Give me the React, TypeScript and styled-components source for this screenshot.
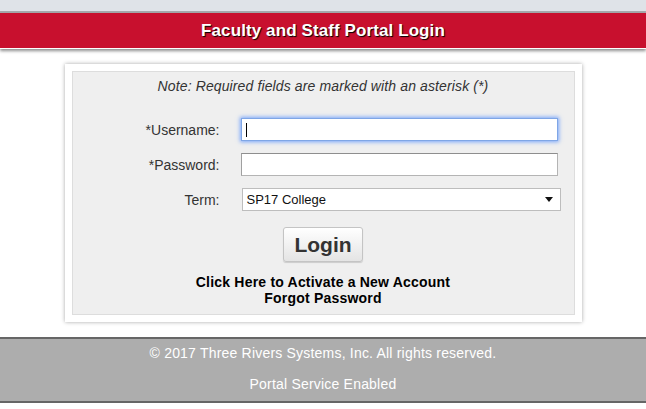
import styled, { createGlobalStyle } from "styled-components";

const GlobalStyle = createGlobalStyle`
  body {
    margin: 0;
    background: #ffffff;
    font-family: "Liberation Sans", Arial, sans-serif;
  }
`;

const TopStrip = styled.div`
  height: 11px;
  background: #dfe3e8;
  border-bottom: 2px solid #a7a9ac;
`;

const TitleBar = styled.div`
  height: 35px;
  background: #c8102e;
  border-bottom: 1px solid #ffffff;
  box-shadow: 0 2px 3px rgba(0, 0, 0, 0.45);
  display: flex;
  align-items: center;
  justify-content: center;
`;

const Title = styled.h1`
  margin: 0;
  font-size: 17px;
  font-weight: bold;
  letter-spacing: 0.1px;
  color: #ffffff;
  text-shadow: 1px 1px 1px #000000;
`;

const Card = styled.div`
  width: 503px;
  margin: 15px auto 0;
  padding: 7px;
  background: #ffffff;
  box-shadow: 0 0 4px rgba(0, 0, 0, 0.35);
`;

const Panel = styled.div`
  background: #efefef;
  border: 1px solid #dddddd;
  padding: 5px 0 8px;
  display: flex;
  flex-direction: column;
  align-items: center;
`;

const Note = styled.p`
  margin: 0;
  font-size: 14px;
  line-height: 18px;
  letter-spacing: 0.12px;
  font-style: italic;
  color: #333333;
`;

const Form = styled.div`
  align-self: stretch;
  margin-top: 23px;
  display: grid;
  grid-template-columns: 147px 320px;
  column-gap: 21px;
  row-gap: 12px;
  align-items: center;
`;

const Label = styled.label`
  text-align: right;
  font-size: 14px;
  color: #333333;
`;

const Field = styled.div<{ $shift?: number }>`
  position: relative;
  margin-left: ${(p) => p.$shift ?? 0}px;
`;

const Input = styled.input<{ $focused?: boolean }>`
  box-sizing: border-box;
  width: 317px;
  height: 23px;
  margin: 0;
  padding: 0 4px;
  font: 13px "Liberation Sans", Arial, sans-serif;
  background: #ffffff;
  outline: none;
  border: 1px solid ${(p) => (p.$focused ? "#7fa6e6" : "#b4b4b4")};
  border-top-color: ${(p) => (p.$focused ? "#7fa6e6" : "#8e8e8e")};
  border-left-color: ${(p) => (p.$focused ? "#7fa6e6" : "#a0a0a0")};
  box-shadow: ${(p) => (p.$focused ? "0 0 4px 1px rgba(80, 140, 255, 0.75)" : "none")};
`;

const Caret = styled.span`
  position: absolute;
  left: 5px;
  top: 5px;
  width: 1px;
  height: 14px;
  background: #000000;
`;

const SelectBox = styled.div`
  box-sizing: border-box;
  width: 319px;
  height: 23px;
  padding: 0 4px;
  display: flex;
  align-items: center;
  justify-content: space-between;
  background: #ffffff;
  border: 1px solid #bdbdbd;
  font-size: 13px;
  color: #111111;
`;

const Arrow = styled.span`
  width: 0;
  height: 0;
  margin-right: 3px;
  border-left: 4px solid transparent;
  border-right: 4px solid transparent;
  border-top: 5px solid #111111;
`;

const LoginButton = styled.button`
  box-sizing: border-box;
  width: 80px;
  height: 35px;
  margin-top: 16px;
  padding: 0;
  font: bold 21px "Liberation Sans", Arial, sans-serif;
  color: #333333;
  background: linear-gradient(#ffffff, #e4e4e4);
  border: 1px solid #c4c4c4;
  border-radius: 3px;
  box-shadow: 0 1px 1px rgba(0, 0, 0, 0.15);
`;

const Links = styled.div`
  margin-top: 12px;
  display: flex;
  flex-direction: column;
  align-items: center;
`;

const TextLink = styled.a`
  font-size: 14px;
  line-height: 16px;
  letter-spacing: 0.2px;
  font-weight: bold;
  color: #000000;
  text-decoration: none;
`;

const Footer = styled.footer`
  margin-top: 15px;
  height: 57px;
  background: #adadad;
  border-top: 2px solid #666666;
  border-bottom: 2px solid #666666;
  display: flex;
  flex-direction: column;
  align-items: center;
  padding-top: 5px;
  box-sizing: content-box;
  gap: 13px;
`;

const FooterText = styled.div`
  font-size: 14px;
  line-height: 18px;
  letter-spacing: 0.2px;
  color: #ffffff;
`;

export default function App() {
  return (
    <>
      <GlobalStyle />
      <TopStrip />
      <TitleBar>
        <Title>Faculty and Staff Portal Login</Title>
      </TitleBar>
      <Card>
        <Panel>
          <Note>Note: Required fields are marked with an asterisk (*)</Note>
          <Form>
            <Label>*Username:</Label>
            <Field>
              <Input type="text" $focused />
              <Caret />
            </Field>
            <Label>*Password:</Label>
            <Field>
              <Input type="password" />
            </Field>
            <Label>Term:</Label>
            <Field $shift={1}>
              <SelectBox>
                SP17 College
                <Arrow />
              </SelectBox>
            </Field>
          </Form>
          <LoginButton>Login</LoginButton>
          <Links>
            <TextLink href="#">Click Here to Activate a New Account</TextLink>
            <TextLink href="#">Forgot Password</TextLink>
          </Links>
        </Panel>
      </Card>
      <Footer>
        <FooterText>© 2017 Three Rivers Systems, Inc. All rights reserved.</FooterText>
        <FooterText>Portal Service Enabled</FooterText>
      </Footer>
    </>
  );
}
